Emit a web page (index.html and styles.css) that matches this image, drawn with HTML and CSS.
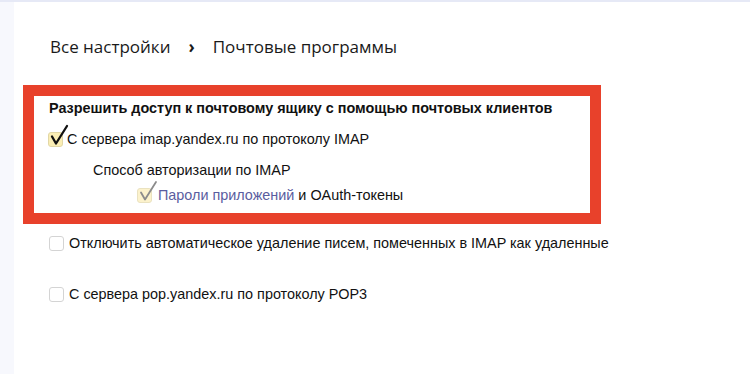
FILE: index.html
```html
<!DOCTYPE html>
<html lang="ru">
<head>
<meta charset="utf-8">
<title>Почтовые программы</title>
<link rel="stylesheet" href="styles.css">
</head>
<body>
<div class="page">
  <div class="sidebar"></div>
  <main class="main">
    <nav class="crumbs">
      <span class="crumb">Все настройки</span>
      <span class="sep">›</span>
      <span class="crumb">Почтовые программы</span>
    </nav>
    <section class="highlight">
      <div class="title">Разрешить доступ к почтовому ящику с помощью почтовых клиентов</div>
      <label class="row row-imap">
        <span class="box checked">
          <svg class="tick" width="20" height="24" viewBox="0 0 20 24"><path d="M3 12.5 L7 19.5 L18 2" fill="none" stroke="#111" stroke-width="2.3" stroke-linecap="round" stroke-linejoin="round"/></svg>
        </span>
        <span class="text">С сервера imap.yandex.ru по протоколу IMAP</span>
      </label>
      <div class="sub">Способ авторизации по IMAP</div>
      <label class="row row-oauth">
        <span class="box checked dim">
          <svg class="tick" width="20" height="24" viewBox="0 0 20 24"><path d="M3 12.5 L7 19.5 L18 2" fill="none" stroke="#8c8c8c" stroke-width="1.8" stroke-linecap="round" stroke-linejoin="round"/></svg>
        </span>
        <span class="text"><a class="link">Пароли приложений</a> и OAuth-токены</span>
      </label>
    </section>
    <label class="row row-del">
      <span class="box"></span>
      <span class="text">Отключить автоматическое удаление писем, помеченных в IMAP как удаленные</span>
    </label>
    <label class="row row-pop">
      <span class="box"></span>
      <span class="text">С сервера pop.yandex.ru по протоколу POP3</span>
    </label>
  </main>
</div>
</body>
</html>
```

FILE: styles.css
```css
html, body {
  margin: 0;
  padding: 0;
  background: #fff;
}
.page {
  display: flex;
  width: 750px;
  height: 374px;
  overflow: hidden;
}
.sidebar {
  width: 14px;
  flex: none;
  background: #f7f8fd;
  border-top: 2px solid #e6e9f6;
}
.main {
  flex: 1;
  border-top: 2px solid #e6e9f6;
  font-family: "Liberation Sans", Arial, sans-serif;
  font-size: 14.4px;
  color: #111;
}
.crumbs {
  display: flex;
  align-items: center;
  margin: 33px 0 0 36px;
  height: 22px;
  font-family: "Open Sans", "Noto Sans", sans-serif;
  font-size: 17px;
  color: #1a1a1a;
}
.sep {
  margin: 0 18px 0 18px;
  font-weight: 700;
}
.highlight {
  margin: 28px 0 0 9px;
  width: 541px;
  border: 11px solid #e8412b;
  padding: 3px 0 9px 15px;
}
.title {
  font-weight: 700;
  line-height: 18px;
  height: 18px;
}
.row {
  display: flex;
  align-items: center;
  line-height: 18px;
}
.box {
  position: relative;
  flex: none;
  box-sizing: border-box;
  width: 15px;
  height: 15px;
  border: 1px solid #d4d4d4;
  border-radius: 3px;
  background: #fff;
  margin-right: 4px;
}
.box.checked {
  background: #fbeeb4;
  border-color: #e2d7a6;
}
.box.dim {
  background: #fcf2cc;
  border-color: #eae2c0;
}
.tick {
  position: absolute;
  left: 0;
  top: -9px;
}
.row-imap {
  margin: 13px 0 0 -1px;
}
.sub {
  margin: 13px 0 0 44px;
  line-height: 18px;
}
.row-oauth {
  margin: 7px 0 0 88px;
}
.row-oauth .box {
  margin-right: 6px;
}
.link {
  color: #5a5da0;
  cursor: pointer;
}
.row-del {
  margin: 10px 0 0 35px;
}
.row-del .box, .row-pop .box {
  margin-right: 5px;
}
.row-pop {
  margin: 33px 0 0 35px;
}
```
